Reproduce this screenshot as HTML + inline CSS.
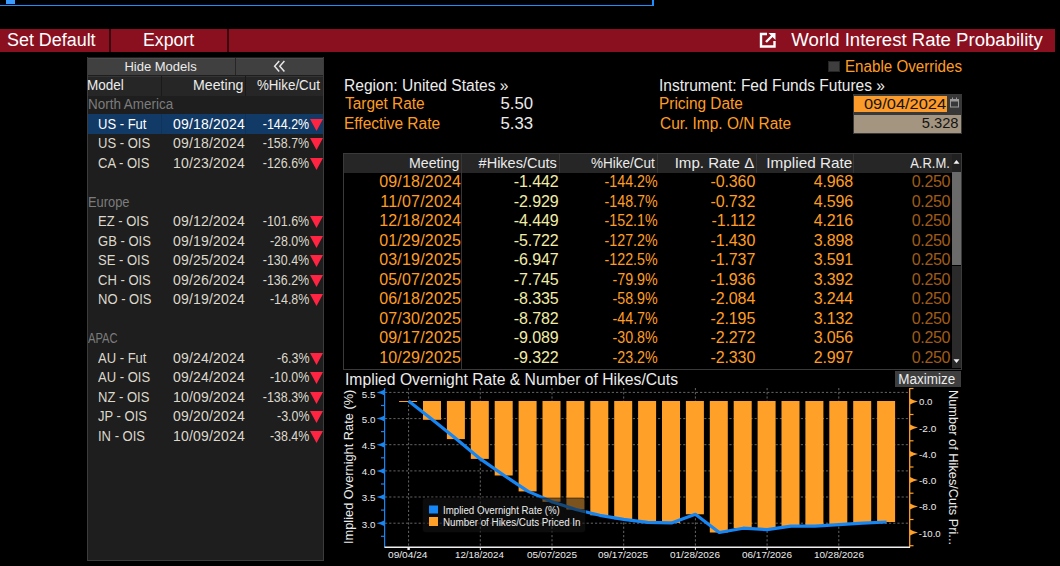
<!DOCTYPE html>
<html><head><meta charset="utf-8"><style>
html,body{margin:0;padding:0;background:#000;width:1060px;height:566px;overflow:hidden;}
body{position:relative;font-family:"Liberation Sans", sans-serif;}
.t{position:absolute;white-space:nowrap;font-family:"Liberation Sans", sans-serif;}
.r{position:absolute;}
</style></head><body>
<div class="r" style="left:0px;top:5px;width:654px;height:1px;background:#1e8fff;"></div>
<div class="r" style="left:652px;top:0px;width:2px;height:6px;background:#1e8fff;"></div>
<div class="r" style="left:6px;top:0px;width:9px;height:4px;background:#3b9bff;"></div>
<div class="r" style="left:0px;top:29px;width:1055px;height:23px;background:#8a1020;"></div>
<div class="r" style="left:109px;top:29px;width:2px;height:23px;background:#3a0610;"></div>
<div class="r" style="left:227px;top:29px;width:2px;height:23px;background:#3a0610;"></div>
<div class="t" style="top:31.00px;font-size:18px;line-height:18px;color:#ffffff;left:7.40px;transform:scaleX(0.9949);transform-origin:left center;">Set Default</div>
<div class="t" style="top:31.00px;font-size:18px;line-height:18px;color:#ffffff;left:143.32px;transform:scaleX(0.9839);transform-origin:left center;">Export</div>
<div class="t" style="top:31.00px;font-size:18px;line-height:18px;color:#ffffff;right:17.60px;transform:scaleX(1.0313);transform-origin:right center;">World Interest Rate Probability</div>
<svg class="r" style="left:758px;top:31px" width="20" height="18" viewBox="0 0 20 18"><path d="M9 3 H3 V15.5 H16.5 V10" fill="none" stroke="#fff" stroke-width="2.4"/><path d="M8 11 L15 4" stroke="#fff" stroke-width="2.4"/><path d="M10.5 2 H17.5 V9 Z" fill="#fff"/></svg>
<div class="r" style="left:87px;top:57px;width:237px;height:504px;background:#1e1e1e;"></div>
<div class="r" style="left:87px;top:57px;width:1px;height:504px;background:#3c3c3c;"></div>
<div class="r" style="left:323px;top:57px;width:1px;height:504px;background:#3c3c3c;"></div>
<div class="r" style="left:87px;top:560px;width:237px;height:1px;background:#3c3c3c;"></div>
<div class="r" style="left:88px;top:58px;width:147px;height:17px;background:#404040;"></div>
<div class="r" style="left:88px;top:58px;width:147px;height:1px;background:#4c4c4c;"></div>
<div class="r" style="left:236px;top:58px;width:87px;height:17px;background:#404040;"></div>
<div class="r" style="left:236px;top:58px;width:87px;height:1px;background:#4c4c4c;"></div>
<div class="r" style="left:235px;top:58px;width:1px;height:17px;background:#262626;"></div>
<div class="t" style="top:60.00px;font-size:13px;line-height:13px;color:#ececec;left:124.40px;">Hide Models</div>
<svg class="r" style="left:270px;top:57px" width="20" height="18"><path d="M9.2 4 L4.6 9.3 L9.2 14.6 M14.4 4 L9.8 9.3 L14.4 14.6" fill="none" stroke="#e6e6e6" stroke-width="1.5"/></svg>
<div class="r" style="left:88px;top:76px;width:235px;height:20px;background:#262626;"></div>
<div class="r" style="left:88px;top:76px;width:235px;height:1px;background:#343434;"></div>
<div class="r" style="left:161px;top:76px;width:1px;height:20px;background:#1a1a1a;"></div>
<div class="r" style="left:245px;top:76px;width:1px;height:20px;background:#1a1a1a;"></div>
<div class="t" style="top:77.00px;font-size:15px;line-height:15px;color:#ececec;left:87.40px;transform:scaleX(0.9008);transform-origin:left center;">Model</div>
<div class="t" style="top:77.00px;font-size:15px;line-height:15px;color:#ececec;right:816.38px;transform:scaleX(0.9419);transform-origin:right center;">Meeting</div>
<div class="t" style="top:77.00px;font-size:15px;line-height:15px;color:#ececec;right:740.24px;transform:scaleX(0.8886);transform-origin:right center;">%Hike/Cut</div>
<div class="t" style="top:97.20px;font-size:14px;line-height:14px;color:#7c7c7c;left:88.30px;transform:scaleX(0.9600);transform-origin:left center;">North America</div>
<div class="r" style="left:88px;top:114px;width:235px;height:20px;background:#123a66;"></div>
<div class="r" style="left:161px;top:114px;width:1px;height:20px;background:#0f335a;"></div>
<div class="r" style="left:245px;top:114px;width:1px;height:20px;background:#0f335a;"></div>
<div class="t" style="top:116.70px;font-size:14px;line-height:14px;color:#ffffff;left:97.50px;transform:scaleX(0.9300);transform-origin:left center;">US - Fut</div>
<div class="t" style="top:116.70px;font-size:14px;line-height:14px;color:#ffffff;letter-spacing:0.2px;right:815.00px;">09/18/2024</div>
<div class="t" style="top:116.70px;font-size:14px;line-height:14px;color:#ffffff;right:750.80px;transform:scaleX(0.8900);transform-origin:right center;">-144.2%</div>
<svg class="r" style="left:310px;top:118.5px" width="13" height="12"><path d="M0 0 H13 L6.5 12 Z" fill="#ff2442"/></svg>
<div class="t" style="top:136.20px;font-size:14px;line-height:14px;color:#dcd8cc;left:97.50px;transform:scaleX(0.9300);transform-origin:left center;">US - OIS</div>
<div class="t" style="top:136.20px;font-size:14px;line-height:14px;color:#dcd8cc;letter-spacing:0.2px;right:815.00px;">09/18/2024</div>
<div class="t" style="top:136.20px;font-size:14px;line-height:14px;color:#dcd8cc;right:750.80px;transform:scaleX(0.8900);transform-origin:right center;">-158.7%</div>
<svg class="r" style="left:310px;top:138.0px" width="13" height="12"><path d="M0 0 H13 L6.5 12 Z" fill="#ff2442"/></svg>
<div class="t" style="top:155.70px;font-size:14px;line-height:14px;color:#dcd8cc;left:97.50px;transform:scaleX(0.9300);transform-origin:left center;">CA - OIS</div>
<div class="t" style="top:155.70px;font-size:14px;line-height:14px;color:#dcd8cc;letter-spacing:0.2px;right:815.00px;">10/23/2024</div>
<div class="t" style="top:155.70px;font-size:14px;line-height:14px;color:#dcd8cc;right:750.80px;transform:scaleX(0.8900);transform-origin:right center;">-126.6%</div>
<svg class="r" style="left:310px;top:157.5px" width="13" height="12"><path d="M0 0 H13 L6.5 12 Z" fill="#ff2442"/></svg>
<div class="t" style="top:194.70px;font-size:14px;line-height:14px;color:#7c7c7c;left:88.30px;transform:scaleX(0.9200);transform-origin:left center;">Europe</div>
<div class="t" style="top:214.20px;font-size:14px;line-height:14px;color:#dcd8cc;left:97.50px;transform:scaleX(0.9300);transform-origin:left center;">EZ - OIS</div>
<div class="t" style="top:214.20px;font-size:14px;line-height:14px;color:#dcd8cc;letter-spacing:0.2px;right:815.00px;">09/12/2024</div>
<div class="t" style="top:214.20px;font-size:14px;line-height:14px;color:#dcd8cc;right:750.80px;transform:scaleX(0.8900);transform-origin:right center;">-101.6%</div>
<svg class="r" style="left:310px;top:216.0px" width="13" height="12"><path d="M0 0 H13 L6.5 12 Z" fill="#ff2442"/></svg>
<div class="t" style="top:233.70px;font-size:14px;line-height:14px;color:#dcd8cc;left:97.50px;transform:scaleX(0.9300);transform-origin:left center;">GB - OIS</div>
<div class="t" style="top:233.70px;font-size:14px;line-height:14px;color:#dcd8cc;letter-spacing:0.2px;right:815.00px;">09/19/2024</div>
<div class="t" style="top:233.70px;font-size:14px;line-height:14px;color:#dcd8cc;right:750.80px;transform:scaleX(0.8900);transform-origin:right center;">-28.0%</div>
<svg class="r" style="left:310px;top:235.5px" width="13" height="12"><path d="M0 0 H13 L6.5 12 Z" fill="#ff2442"/></svg>
<div class="t" style="top:253.20px;font-size:14px;line-height:14px;color:#dcd8cc;left:97.50px;transform:scaleX(0.9300);transform-origin:left center;">SE - OIS</div>
<div class="t" style="top:253.20px;font-size:14px;line-height:14px;color:#dcd8cc;letter-spacing:0.2px;right:815.00px;">09/25/2024</div>
<div class="t" style="top:253.20px;font-size:14px;line-height:14px;color:#dcd8cc;right:750.80px;transform:scaleX(0.8900);transform-origin:right center;">-130.4%</div>
<svg class="r" style="left:310px;top:255.0px" width="13" height="12"><path d="M0 0 H13 L6.5 12 Z" fill="#ff2442"/></svg>
<div class="t" style="top:272.70px;font-size:14px;line-height:14px;color:#dcd8cc;left:97.50px;transform:scaleX(0.9300);transform-origin:left center;">CH - OIS</div>
<div class="t" style="top:272.70px;font-size:14px;line-height:14px;color:#dcd8cc;letter-spacing:0.2px;right:815.00px;">09/26/2024</div>
<div class="t" style="top:272.70px;font-size:14px;line-height:14px;color:#dcd8cc;right:750.80px;transform:scaleX(0.8900);transform-origin:right center;">-136.2%</div>
<svg class="r" style="left:310px;top:274.5px" width="13" height="12"><path d="M0 0 H13 L6.5 12 Z" fill="#ff2442"/></svg>
<div class="t" style="top:292.20px;font-size:14px;line-height:14px;color:#dcd8cc;left:97.50px;transform:scaleX(0.9300);transform-origin:left center;">NO - OIS</div>
<div class="t" style="top:292.20px;font-size:14px;line-height:14px;color:#dcd8cc;letter-spacing:0.2px;right:815.00px;">09/19/2024</div>
<div class="t" style="top:292.20px;font-size:14px;line-height:14px;color:#dcd8cc;right:750.80px;transform:scaleX(0.8900);transform-origin:right center;">-14.8%</div>
<svg class="r" style="left:310px;top:294.0px" width="13" height="12"><path d="M0 0 H13 L6.5 12 Z" fill="#ff2442"/></svg>
<div class="t" style="top:331.20px;font-size:14px;line-height:14px;color:#7c7c7c;left:88.30px;transform:scaleX(0.8000);transform-origin:left center;">APAC</div>
<div class="t" style="top:350.70px;font-size:14px;line-height:14px;color:#dcd8cc;left:97.50px;transform:scaleX(0.9300);transform-origin:left center;">AU - Fut</div>
<div class="t" style="top:350.70px;font-size:14px;line-height:14px;color:#dcd8cc;letter-spacing:0.2px;right:815.00px;">09/24/2024</div>
<div class="t" style="top:350.70px;font-size:14px;line-height:14px;color:#dcd8cc;right:750.80px;transform:scaleX(0.8900);transform-origin:right center;">-6.3%</div>
<svg class="r" style="left:310px;top:352.5px" width="13" height="12"><path d="M0 0 H13 L6.5 12 Z" fill="#ff2442"/></svg>
<div class="t" style="top:370.20px;font-size:14px;line-height:14px;color:#dcd8cc;left:97.50px;transform:scaleX(0.9300);transform-origin:left center;">AU - OIS</div>
<div class="t" style="top:370.20px;font-size:14px;line-height:14px;color:#dcd8cc;letter-spacing:0.2px;right:815.00px;">09/24/2024</div>
<div class="t" style="top:370.20px;font-size:14px;line-height:14px;color:#dcd8cc;right:750.80px;transform:scaleX(0.8900);transform-origin:right center;">-10.0%</div>
<svg class="r" style="left:310px;top:372.0px" width="13" height="12"><path d="M0 0 H13 L6.5 12 Z" fill="#ff2442"/></svg>
<div class="t" style="top:389.70px;font-size:14px;line-height:14px;color:#dcd8cc;left:97.50px;transform:scaleX(0.9300);transform-origin:left center;">NZ - OIS</div>
<div class="t" style="top:389.70px;font-size:14px;line-height:14px;color:#dcd8cc;letter-spacing:0.2px;right:815.00px;">10/09/2024</div>
<div class="t" style="top:389.70px;font-size:14px;line-height:14px;color:#dcd8cc;right:750.80px;transform:scaleX(0.8900);transform-origin:right center;">-138.3%</div>
<svg class="r" style="left:310px;top:391.5px" width="13" height="12"><path d="M0 0 H13 L6.5 12 Z" fill="#ff2442"/></svg>
<div class="t" style="top:409.20px;font-size:14px;line-height:14px;color:#dcd8cc;left:97.50px;transform:scaleX(0.9300);transform-origin:left center;">JP - OIS</div>
<div class="t" style="top:409.20px;font-size:14px;line-height:14px;color:#dcd8cc;letter-spacing:0.2px;right:815.00px;">09/20/2024</div>
<div class="t" style="top:409.20px;font-size:14px;line-height:14px;color:#dcd8cc;right:750.80px;transform:scaleX(0.8900);transform-origin:right center;">-3.0%</div>
<svg class="r" style="left:310px;top:411.0px" width="13" height="12"><path d="M0 0 H13 L6.5 12 Z" fill="#ff2442"/></svg>
<div class="t" style="top:428.70px;font-size:14px;line-height:14px;color:#dcd8cc;left:97.50px;transform:scaleX(0.9300);transform-origin:left center;">IN - OIS</div>
<div class="t" style="top:428.70px;font-size:14px;line-height:14px;color:#dcd8cc;letter-spacing:0.2px;right:815.00px;">10/09/2024</div>
<div class="t" style="top:428.70px;font-size:14px;line-height:14px;color:#dcd8cc;right:750.80px;transform:scaleX(0.8900);transform-origin:right center;">-38.4%</div>
<svg class="r" style="left:310px;top:430.5px" width="13" height="12"><path d="M0 0 H13 L6.5 12 Z" fill="#ff2442"/></svg>
<div class="t" style="top:78.00px;font-size:16px;line-height:16px;color:#ececec;left:344.33px;transform:scaleX(0.9733);transform-origin:left center;">Region: United States &#187;</div>
<div class="t" style="top:96.00px;font-size:16px;line-height:16px;color:#ff9d22;left:345.30px;transform:scaleX(0.9624);transform-origin:left center;">Target Rate</div>
<div class="t" style="top:115.50px;font-size:16px;line-height:16px;color:#ff9d22;left:344.33px;transform:scaleX(0.9673);transform-origin:left center;">Effective Rate</div>
<div class="t" style="top:96.00px;font-size:16px;line-height:16px;color:#ececec;right:527.11px;transform:scaleX(1.0467);transform-origin:right center;">5.50</div>
<div class="t" style="top:115.50px;font-size:16px;line-height:16px;color:#ececec;right:527.11px;transform:scaleX(1.0467);transform-origin:right center;">5.33</div>
<div class="t" style="top:78.00px;font-size:16px;line-height:16px;color:#ececec;left:659.33px;transform:scaleX(0.9694);transform-origin:left center;">Instrument: Fed Funds Futures &#187;</div>
<div class="t" style="top:96.00px;font-size:16px;line-height:16px;color:#ff9d22;left:659.34px;transform:scaleX(0.9623);transform-origin:left center;">Pricing Date</div>
<div class="t" style="top:115.50px;font-size:16px;line-height:16px;color:#ff9d22;left:660.30px;transform:scaleX(0.9644);transform-origin:left center;">Cur. Imp. O/N Rate</div>
<div class="r" style="left:828px;top:61px;width:12px;height:11px;background:#3e3e3e;border:1px solid #262626;box-sizing:border-box;"></div>
<div class="t" style="top:59.00px;font-size:16px;line-height:16px;color:#ff9d22;left:844.75px;transform:scaleX(0.9468);transform-origin:left center;">Enable Overrides</div>
<div class="r" style="left:853px;top:94px;width:109px;height:40px;background:#383838;"></div>
<div class="r" style="left:854px;top:96px;width:93px;height:16px;background:#fd9b2a;"></div>
<div class="t" style="top:95.50px;font-size:15px;line-height:15px;color:#141414;right:114.43px;transform:scaleX(1.0933);transform-origin:right center;">09/04/2024</div>
<svg class="r" style="left:949px;top:96px" width="11" height="13"><rect x="1.5" y="3.5" width="8" height="7.5" fill="none" stroke="#9a9a9a" stroke-width="1"/><rect x="1.5" y="3.5" width="8" height="2" fill="#9a9a9a"/><rect x="3" y="1.5" width="1" height="2.5" fill="#9a9a9a"/><rect x="7" y="1.5" width="1" height="2.5" fill="#9a9a9a"/></svg>
<div class="r" style="left:854px;top:115px;width:107px;height:18px;background:#a49580;"></div>
<div class="t" style="top:115.00px;font-size:15px;line-height:15px;color:#141414;right:101.26px;transform:scaleX(0.9813);transform-origin:right center;">5.328</div>
<div class="r" style="left:343px;top:153px;width:619px;height:217px;background:#000000;"></div>
<div class="r" style="left:343px;top:153px;width:619px;height:1px;background:#3a3a3a;"></div>
<div class="r" style="left:343px;top:369px;width:619px;height:1px;background:#3a3a3a;"></div>
<div class="r" style="left:343px;top:153px;width:1px;height:217px;background:#3a3a3a;"></div>
<div class="r" style="left:961px;top:153px;width:1px;height:217px;background:#3a3a3a;"></div>
<div class="r" style="left:344px;top:154px;width:608px;height:19px;background:#262626;"></div>
<div class="r" style="left:461px;top:154px;width:1px;height:19px;background:#363636;"></div>
<div class="r" style="left:559px;top:154px;width:1px;height:19px;background:#363636;"></div>
<div class="r" style="left:657px;top:154px;width:1px;height:19px;background:#363636;"></div>
<div class="r" style="left:756px;top:154px;width:1px;height:19px;background:#363636;"></div>
<div class="r" style="left:853px;top:154px;width:1px;height:19px;background:#363636;"></div>
<div class="r" style="left:461px;top:173px;width:1px;height:196px;background:#363636;"></div>
<div class="t" style="top:155.00px;font-size:15px;line-height:15px;color:#ececec;right:600.78px;transform:scaleX(0.9419);transform-origin:right center;">Meeting</div>
<div class="t" style="top:155.00px;font-size:15px;line-height:15px;color:#ececec;right:502.82px;transform:scaleX(0.9682);transform-origin:right center;">#Hikes/Cuts</div>
<div class="t" style="top:155.00px;font-size:15px;line-height:15px;color:#ececec;right:405.45px;transform:scaleX(0.8997);transform-origin:right center;">%Hike/Cut</div>
<div class="t" style="top:155.00px;font-size:15px;line-height:15px;color:#ececec;right:305.78px;transform:scaleX(1.0039);transform-origin:right center;">Imp. Rate &#916;</div>
<div class="t" style="top:155.00px;font-size:15px;line-height:15px;color:#ececec;right:207.95px;transform:scaleX(1.0197);transform-origin:right center;">Implied Rate</div>
<div class="t" style="top:155.00px;font-size:15px;line-height:15px;color:#ececec;right:110.39px;transform:scaleX(0.8642);transform-origin:right center;">A.R.M.</div>
<div class="r" style="left:952px;top:154px;width:9px;height:18px;background:#202020;"></div>
<div class="r" style="left:952px;top:172px;width:9px;height:93px;background:#6a6a6a;"></div>
<div class="r" style="left:952px;top:266px;width:9px;height:102px;background:#2a2a2a;"></div>
<svg class="r" style="left:952px;top:158px" width="9" height="8"><path d="M1.5 5.8 L4.5 2 L7.5 5.8 Z" fill="#f0f0f0"/></svg>
<svg class="r" style="left:952px;top:357px" width="9" height="8"><path d="M1.5 2.2 L4.5 6 L7.5 2.2 Z" fill="#f0f0f0"/></svg>
<div class="t" style="top:174.00px;font-size:16px;line-height:16px;color:#ff9d22;letter-spacing:0.2px;right:598.80px;">09/18/2024</div>
<div class="t" style="top:174.00px;font-size:16px;line-height:16px;color:#f2eca6;letter-spacing:-0.1px;right:501.40px;">-1.442</div>
<div class="t" style="top:174.00px;font-size:16px;line-height:16px;color:#ff9d22;right:402.40px;transform:scaleX(0.8900);transform-origin:right center;">-144.2%</div>
<div class="t" style="top:174.00px;font-size:16px;line-height:16px;color:#ff9d22;letter-spacing:-0.1px;right:304.80px;">-0.360</div>
<div class="t" style="top:174.00px;font-size:16px;line-height:16px;color:#ff9d22;letter-spacing:-0.2px;right:207.10px;">4.968</div>
<div class="t" style="top:174.00px;font-size:16px;line-height:16px;color:#a05c16;letter-spacing:-0.3px;right:109.80px;">0.250</div>
<div class="t" style="top:193.50px;font-size:16px;line-height:16px;color:#ff9d22;letter-spacing:0.2px;right:598.80px;">11/07/2024</div>
<div class="t" style="top:193.50px;font-size:16px;line-height:16px;color:#f2eca6;letter-spacing:-0.1px;right:501.40px;">-2.929</div>
<div class="t" style="top:193.50px;font-size:16px;line-height:16px;color:#ff9d22;right:402.40px;transform:scaleX(0.8900);transform-origin:right center;">-148.7%</div>
<div class="t" style="top:193.50px;font-size:16px;line-height:16px;color:#ff9d22;letter-spacing:-0.1px;right:304.80px;">-0.732</div>
<div class="t" style="top:193.50px;font-size:16px;line-height:16px;color:#ff9d22;letter-spacing:-0.2px;right:207.10px;">4.596</div>
<div class="t" style="top:193.50px;font-size:16px;line-height:16px;color:#a05c16;letter-spacing:-0.3px;right:109.80px;">0.250</div>
<div class="t" style="top:213.00px;font-size:16px;line-height:16px;color:#ff9d22;letter-spacing:0.2px;right:598.80px;">12/18/2024</div>
<div class="t" style="top:213.00px;font-size:16px;line-height:16px;color:#f2eca6;letter-spacing:-0.1px;right:501.40px;">-4.449</div>
<div class="t" style="top:213.00px;font-size:16px;line-height:16px;color:#ff9d22;right:402.40px;transform:scaleX(0.8900);transform-origin:right center;">-152.1%</div>
<div class="t" style="top:213.00px;font-size:16px;line-height:16px;color:#ff9d22;letter-spacing:-0.1px;right:304.80px;">-1.112</div>
<div class="t" style="top:213.00px;font-size:16px;line-height:16px;color:#ff9d22;letter-spacing:-0.2px;right:207.10px;">4.216</div>
<div class="t" style="top:213.00px;font-size:16px;line-height:16px;color:#a05c16;letter-spacing:-0.3px;right:109.80px;">0.250</div>
<div class="t" style="top:232.50px;font-size:16px;line-height:16px;color:#ff9d22;letter-spacing:0.2px;right:598.80px;">01/29/2025</div>
<div class="t" style="top:232.50px;font-size:16px;line-height:16px;color:#f2eca6;letter-spacing:-0.1px;right:501.40px;">-5.722</div>
<div class="t" style="top:232.50px;font-size:16px;line-height:16px;color:#ff9d22;right:402.40px;transform:scaleX(0.8900);transform-origin:right center;">-127.2%</div>
<div class="t" style="top:232.50px;font-size:16px;line-height:16px;color:#ff9d22;letter-spacing:-0.1px;right:304.80px;">-1.430</div>
<div class="t" style="top:232.50px;font-size:16px;line-height:16px;color:#ff9d22;letter-spacing:-0.2px;right:207.10px;">3.898</div>
<div class="t" style="top:232.50px;font-size:16px;line-height:16px;color:#a05c16;letter-spacing:-0.3px;right:109.80px;">0.250</div>
<div class="t" style="top:252.00px;font-size:16px;line-height:16px;color:#ff9d22;letter-spacing:0.2px;right:598.80px;">03/19/2025</div>
<div class="t" style="top:252.00px;font-size:16px;line-height:16px;color:#f2eca6;letter-spacing:-0.1px;right:501.40px;">-6.947</div>
<div class="t" style="top:252.00px;font-size:16px;line-height:16px;color:#ff9d22;right:402.40px;transform:scaleX(0.8900);transform-origin:right center;">-122.5%</div>
<div class="t" style="top:252.00px;font-size:16px;line-height:16px;color:#ff9d22;letter-spacing:-0.1px;right:304.80px;">-1.737</div>
<div class="t" style="top:252.00px;font-size:16px;line-height:16px;color:#ff9d22;letter-spacing:-0.2px;right:207.10px;">3.591</div>
<div class="t" style="top:252.00px;font-size:16px;line-height:16px;color:#a05c16;letter-spacing:-0.3px;right:109.80px;">0.250</div>
<div class="t" style="top:271.50px;font-size:16px;line-height:16px;color:#ff9d22;letter-spacing:0.2px;right:598.80px;">05/07/2025</div>
<div class="t" style="top:271.50px;font-size:16px;line-height:16px;color:#f2eca6;letter-spacing:-0.1px;right:501.40px;">-7.745</div>
<div class="t" style="top:271.50px;font-size:16px;line-height:16px;color:#ff9d22;right:402.40px;transform:scaleX(0.8900);transform-origin:right center;">-79.9%</div>
<div class="t" style="top:271.50px;font-size:16px;line-height:16px;color:#ff9d22;letter-spacing:-0.1px;right:304.80px;">-1.936</div>
<div class="t" style="top:271.50px;font-size:16px;line-height:16px;color:#ff9d22;letter-spacing:-0.2px;right:207.10px;">3.392</div>
<div class="t" style="top:271.50px;font-size:16px;line-height:16px;color:#a05c16;letter-spacing:-0.3px;right:109.80px;">0.250</div>
<div class="t" style="top:291.00px;font-size:16px;line-height:16px;color:#ff9d22;letter-spacing:0.2px;right:598.80px;">06/18/2025</div>
<div class="t" style="top:291.00px;font-size:16px;line-height:16px;color:#f2eca6;letter-spacing:-0.1px;right:501.40px;">-8.335</div>
<div class="t" style="top:291.00px;font-size:16px;line-height:16px;color:#ff9d22;right:402.40px;transform:scaleX(0.8900);transform-origin:right center;">-58.9%</div>
<div class="t" style="top:291.00px;font-size:16px;line-height:16px;color:#ff9d22;letter-spacing:-0.1px;right:304.80px;">-2.084</div>
<div class="t" style="top:291.00px;font-size:16px;line-height:16px;color:#ff9d22;letter-spacing:-0.2px;right:207.10px;">3.244</div>
<div class="t" style="top:291.00px;font-size:16px;line-height:16px;color:#a05c16;letter-spacing:-0.3px;right:109.80px;">0.250</div>
<div class="t" style="top:310.50px;font-size:16px;line-height:16px;color:#ff9d22;letter-spacing:0.2px;right:598.80px;">07/30/2025</div>
<div class="t" style="top:310.50px;font-size:16px;line-height:16px;color:#f2eca6;letter-spacing:-0.1px;right:501.40px;">-8.782</div>
<div class="t" style="top:310.50px;font-size:16px;line-height:16px;color:#ff9d22;right:402.40px;transform:scaleX(0.8900);transform-origin:right center;">-44.7%</div>
<div class="t" style="top:310.50px;font-size:16px;line-height:16px;color:#ff9d22;letter-spacing:-0.1px;right:304.80px;">-2.195</div>
<div class="t" style="top:310.50px;font-size:16px;line-height:16px;color:#ff9d22;letter-spacing:-0.2px;right:207.10px;">3.132</div>
<div class="t" style="top:310.50px;font-size:16px;line-height:16px;color:#a05c16;letter-spacing:-0.3px;right:109.80px;">0.250</div>
<div class="t" style="top:330.00px;font-size:16px;line-height:16px;color:#ff9d22;letter-spacing:0.2px;right:598.80px;">09/17/2025</div>
<div class="t" style="top:330.00px;font-size:16px;line-height:16px;color:#f2eca6;letter-spacing:-0.1px;right:501.40px;">-9.089</div>
<div class="t" style="top:330.00px;font-size:16px;line-height:16px;color:#ff9d22;right:402.40px;transform:scaleX(0.8900);transform-origin:right center;">-30.8%</div>
<div class="t" style="top:330.00px;font-size:16px;line-height:16px;color:#ff9d22;letter-spacing:-0.1px;right:304.80px;">-2.272</div>
<div class="t" style="top:330.00px;font-size:16px;line-height:16px;color:#ff9d22;letter-spacing:-0.2px;right:207.10px;">3.056</div>
<div class="t" style="top:330.00px;font-size:16px;line-height:16px;color:#a05c16;letter-spacing:-0.3px;right:109.80px;">0.250</div>
<div class="t" style="top:349.50px;font-size:16px;line-height:16px;color:#ff9d22;letter-spacing:0.2px;right:598.80px;">10/29/2025</div>
<div class="t" style="top:349.50px;font-size:16px;line-height:16px;color:#f2eca6;letter-spacing:-0.1px;right:501.40px;">-9.322</div>
<div class="t" style="top:349.50px;font-size:16px;line-height:16px;color:#ff9d22;right:402.40px;transform:scaleX(0.8900);transform-origin:right center;">-23.2%</div>
<div class="t" style="top:349.50px;font-size:16px;line-height:16px;color:#ff9d22;letter-spacing:-0.1px;right:304.80px;">-2.330</div>
<div class="t" style="top:349.50px;font-size:16px;line-height:16px;color:#ff9d22;letter-spacing:-0.2px;right:207.10px;">2.997</div>
<div class="t" style="top:349.50px;font-size:16px;line-height:16px;color:#a05c16;letter-spacing:-0.3px;right:109.80px;">0.250</div>
<div class="t" style="top:372.00px;font-size:16px;line-height:16px;color:#ececec;left:345.02px;transform:scaleX(0.9803);transform-origin:left center;">Implied Overnight Rate &amp; Number of Hikes/Cuts</div>
<div class="r" style="left:895px;top:371px;width:66px;height:16px;background:#3e3e3e;"></div>
<div class="t" style="top:372.00px;font-size:14px;line-height:14px;color:#ececec;right:104.51px;transform:scaleX(0.9600);transform-origin:right center;">Maximize</div>
<svg class="r" style="left:0;top:0" width="1060" height="566" viewBox="0 0 1060 566">
<line x1="385" y1="392.4" x2="908" y2="392.4" stroke="#646464" stroke-width="1" stroke-dasharray="2.2 2"/>
<line x1="385" y1="418.6" x2="908" y2="418.6" stroke="#646464" stroke-width="1" stroke-dasharray="2.2 2"/>
<line x1="385" y1="444.7" x2="908" y2="444.7" stroke="#646464" stroke-width="1" stroke-dasharray="2.2 2"/>
<line x1="385" y1="470.9" x2="908" y2="470.9" stroke="#646464" stroke-width="1" stroke-dasharray="2.2 2"/>
<line x1="385" y1="497.0" x2="908" y2="497.0" stroke="#646464" stroke-width="1" stroke-dasharray="2.2 2"/>
<line x1="385" y1="523.2" x2="908" y2="523.2" stroke="#646464" stroke-width="1" stroke-dasharray="2.2 2"/>
<line x1="408.6" y1="388" x2="408.6" y2="547" stroke="#646464" stroke-width="1" stroke-dasharray="2.2 2"/>
<line x1="480.3" y1="388" x2="480.3" y2="547" stroke="#646464" stroke-width="1" stroke-dasharray="2.2 2"/>
<line x1="552.0" y1="388" x2="552.0" y2="547" stroke="#646464" stroke-width="1" stroke-dasharray="2.2 2"/>
<line x1="623.7" y1="388" x2="623.7" y2="547" stroke="#646464" stroke-width="1" stroke-dasharray="2.2 2"/>
<line x1="695.4" y1="388" x2="695.4" y2="547" stroke="#646464" stroke-width="1" stroke-dasharray="2.2 2"/>
<line x1="767.1" y1="388" x2="767.1" y2="547" stroke="#646464" stroke-width="1" stroke-dasharray="2.2 2"/>
<line x1="838.8" y1="388" x2="838.8" y2="547" stroke="#646464" stroke-width="1" stroke-dasharray="2.2 2"/>
<line x1="399.1" y1="401.5" x2="417.1" y2="401.5" stroke="#ffa028" stroke-width="1"/>
<rect x="423.0" y="401.0" width="18" height="18.8" fill="#ffa028"/>
<rect x="446.9" y="401.0" width="18" height="38.1" fill="#ffa028"/>
<rect x="470.8" y="401.0" width="18" height="57.9" fill="#ffa028"/>
<rect x="494.7" y="401.0" width="18" height="74.5" fill="#ffa028"/>
<rect x="518.6" y="401.0" width="18" height="90.4" fill="#ffa028"/>
<rect x="542.5" y="401.0" width="18" height="100.8" fill="#ffa028"/>
<rect x="566.4" y="401.0" width="18" height="108.5" fill="#ffa028"/>
<rect x="590.3" y="401.0" width="18" height="114.3" fill="#ffa028"/>
<rect x="614.2" y="401.0" width="18" height="118.3" fill="#ffa028"/>
<rect x="638.1" y="401.0" width="18" height="121.4" fill="#ffa028"/>
<rect x="662.0" y="401.0" width="18" height="121.9" fill="#ffa028"/>
<rect x="685.9" y="401.0" width="18" height="113.3" fill="#ffa028"/>
<rect x="709.8" y="401.0" width="18" height="131.5" fill="#ffa028"/>
<rect x="733.7" y="401.0" width="18" height="127.2" fill="#ffa028"/>
<rect x="757.6" y="401.0" width="18" height="128.6" fill="#ffa028"/>
<rect x="781.5" y="401.0" width="18" height="125.1" fill="#ffa028"/>
<rect x="805.4" y="401.0" width="18" height="125.1" fill="#ffa028"/>
<rect x="829.3" y="401.0" width="18" height="123.6" fill="#ffa028"/>
<rect x="853.2" y="401.0" width="18" height="122.1" fill="#ffa028"/>
<rect x="877.1" y="401.0" width="18" height="121.0" fill="#ffa028"/>
<polyline points="408.6,401.0 432.5,419.8 456.4,439.1 480.3,458.9 504.2,475.5 528.1,491.4 552.0,501.8 575.9,509.5 599.8,515.3 623.7,519.3 647.6,522.4 671.5,522.9 695.4,514.3 719.3,532.5 743.2,528.2 767.1,529.6 791.0,526.1 814.9,526.1 838.8,524.6 862.7,523.1 886.6,522.0" fill="none" stroke="#1686f5" stroke-width="3.2" stroke-linejoin="round"/>
<rect x="422.5" y="498" width="163" height="34.5" rx="3" fill="rgba(22,22,22,0.56)" stroke="rgba(0,0,0,0.5)" stroke-width="1"/>
<rect x="429" y="505.5" width="9" height="8" fill="#1686f5"/>
<rect x="429" y="517" width="9" height="9" fill="#ffa028"/>
<line x1="384.6" y1="388" x2="384.6" y2="547.5" stroke="#1686f5" stroke-width="1.2"/>
<path d="M376.5 392.4 Q381 391.4 384.7 389.4 V395.4 Q381 393.4 376.5 392.4 Z" fill="#1686f5"/>
<line x1="381" y1="405.5" x2="384.7" y2="405.5" stroke="#1686f5" stroke-width="1.2"/>
<path d="M376.5 418.6 Q381 417.6 384.7 415.6 V421.6 Q381 419.6 376.5 418.6 Z" fill="#1686f5"/>
<line x1="381" y1="431.6" x2="384.7" y2="431.6" stroke="#1686f5" stroke-width="1.2"/>
<path d="M376.5 444.7 Q381 443.7 384.7 441.7 V447.7 Q381 445.7 376.5 444.7 Z" fill="#1686f5"/>
<line x1="381" y1="457.8" x2="384.7" y2="457.8" stroke="#1686f5" stroke-width="1.2"/>
<path d="M376.5 470.9 Q381 469.9 384.7 467.9 V473.9 Q381 471.9 376.5 470.9 Z" fill="#1686f5"/>
<line x1="381" y1="484.0" x2="384.7" y2="484.0" stroke="#1686f5" stroke-width="1.2"/>
<path d="M376.5 497.0 Q381 496.0 384.7 494.0 V500.0 Q381 498.0 376.5 497.0 Z" fill="#1686f5"/>
<line x1="381" y1="510.1" x2="384.7" y2="510.1" stroke="#1686f5" stroke-width="1.2"/>
<path d="M376.5 523.2 Q381 522.2 384.7 520.2 V526.2 Q381 524.2 376.5 523.2 Z" fill="#1686f5"/>
<line x1="381" y1="536.3" x2="384.7" y2="536.3" stroke="#1686f5" stroke-width="1.2"/>
<line x1="909.7" y1="388" x2="909.7" y2="547.5" stroke="#ffa028" stroke-width="1.3"/>
<line x1="910" y1="388.5" x2="913.5" y2="388.5" stroke="#ffa028" stroke-width="1.2"/>
<path d="M918 401.4 Q913.5 400.4 910 398.4 V404.4 Q913.5 402.4 918 401.4 Z" fill="#ffa028"/>
<line x1="910" y1="414.5" x2="913.5" y2="414.5" stroke="#ffa028" stroke-width="1.2"/>
<path d="M918 427.6 Q913.5 426.6 910 424.6 V430.6 Q913.5 428.6 918 427.6 Z" fill="#ffa028"/>
<line x1="910" y1="440.8" x2="913.5" y2="440.8" stroke="#ffa028" stroke-width="1.2"/>
<path d="M918 453.9 Q913.5 452.9 910 450.9 V456.9 Q913.5 454.9 918 453.9 Z" fill="#ffa028"/>
<line x1="910" y1="467.0" x2="913.5" y2="467.0" stroke="#ffa028" stroke-width="1.2"/>
<path d="M918 480.1 Q913.5 479.1 910 477.1 V483.1 Q913.5 481.1 918 480.1 Z" fill="#ffa028"/>
<line x1="910" y1="493.2" x2="913.5" y2="493.2" stroke="#ffa028" stroke-width="1.2"/>
<path d="M918 506.4 Q913.5 505.4 910 503.4 V509.4 Q913.5 507.4 918 506.4 Z" fill="#ffa028"/>
<line x1="910" y1="519.5" x2="913.5" y2="519.5" stroke="#ffa028" stroke-width="1.2"/>
<path d="M918 532.6 Q913.5 531.6 910 529.6 V535.6 Q913.5 533.6 918 532.6 Z" fill="#ffa028"/>
<line x1="910" y1="545.7" x2="913.5" y2="545.7" stroke="#ffa028" stroke-width="1.2"/>
<line x1="384.5" y1="547.3" x2="910" y2="547.3" stroke="#f0f0f0" stroke-width="1.4"/>
<line x1="408.6" y1="547" x2="408.6" y2="550" stroke="#f0f0f0" stroke-width="2.4"/>
<line x1="480.3" y1="547" x2="480.3" y2="550" stroke="#f0f0f0" stroke-width="1"/>
<line x1="552.0" y1="547" x2="552.0" y2="550" stroke="#f0f0f0" stroke-width="1"/>
<line x1="623.7" y1="547" x2="623.7" y2="550" stroke="#f0f0f0" stroke-width="1"/>
<line x1="695.4" y1="547" x2="695.4" y2="550" stroke="#f0f0f0" stroke-width="1"/>
<line x1="767.1" y1="547" x2="767.1" y2="550" stroke="#f0f0f0" stroke-width="1"/>
<line x1="838.8" y1="547" x2="838.8" y2="550" stroke="#f0f0f0" stroke-width="1"/>
</svg>
<div class="t" style="top:390.20px;font-size:9.6px;line-height:9.6px;color:#ececec;right:684.36px;transform:scaleX(1.0153);transform-origin:right center;">5.5</div>
<div class="t" style="top:414.86px;font-size:9.6px;line-height:9.6px;color:#ececec;right:684.36px;transform:scaleX(1.0153);transform-origin:right center;">5.0</div>
<div class="t" style="top:441.02px;font-size:9.6px;line-height:9.6px;color:#ececec;right:684.36px;transform:scaleX(1.0153);transform-origin:right center;">4.5</div>
<div class="t" style="top:467.18px;font-size:9.6px;line-height:9.6px;color:#ececec;right:684.36px;transform:scaleX(1.0153);transform-origin:right center;">4.0</div>
<div class="t" style="top:493.34px;font-size:9.6px;line-height:9.6px;color:#ececec;right:684.36px;transform:scaleX(1.0153);transform-origin:right center;">3.5</div>
<div class="t" style="top:519.50px;font-size:9.6px;line-height:9.6px;color:#ececec;right:684.36px;transform:scaleX(1.0153);transform-origin:right center;">3.0</div>
<div class="t" style="top:397.40px;font-size:9.6px;line-height:9.6px;color:#ececec;left:918.80px;transform:scaleX(1.0076);transform-origin:left center;">0.0</div>
<div class="t" style="top:423.64px;font-size:9.6px;line-height:9.6px;color:#ececec;left:918.80px;transform:scaleX(1.0435);transform-origin:left center;">-2.0</div>
<div class="t" style="top:449.88px;font-size:9.6px;line-height:9.6px;color:#ececec;left:918.80px;transform:scaleX(1.0435);transform-origin:left center;">-4.0</div>
<div class="t" style="top:476.12px;font-size:9.6px;line-height:9.6px;color:#ececec;left:918.80px;transform:scaleX(1.0435);transform-origin:left center;">-6.0</div>
<div class="t" style="top:502.36px;font-size:9.6px;line-height:9.6px;color:#ececec;left:918.80px;transform:scaleX(1.0435);transform-origin:left center;">-8.0</div>
<div class="t" style="top:528.60px;font-size:9.6px;line-height:9.6px;color:#ececec;left:918.80px;">-10.0</div>
<div class="t" style="top:550.00px;font-size:9.6px;line-height:9.6px;color:#ececec;left:388.00px;transform:scaleX(1.0576);transform-origin:left center;">09/04/24</div>
<div class="t" style="top:550.00px;font-size:9.6px;line-height:9.6px;color:#ececec;left:455.00px;transform:scaleX(1.0189);transform-origin:left center;">12/18/2024</div>
<div class="t" style="top:550.00px;font-size:9.6px;line-height:9.6px;color:#ececec;left:526.70px;transform:scaleX(1.0403);transform-origin:left center;">05/07/2025</div>
<div class="t" style="top:550.00px;font-size:9.6px;line-height:9.6px;color:#ececec;left:598.40px;transform:scaleX(1.0403);transform-origin:left center;">09/17/2025</div>
<div class="t" style="top:550.00px;font-size:9.6px;line-height:9.6px;color:#ececec;left:670.10px;transform:scaleX(1.0403);transform-origin:left center;">01/28/2026</div>
<div class="t" style="top:550.00px;font-size:9.6px;line-height:9.6px;color:#ececec;left:741.80px;transform:scaleX(1.0403);transform-origin:left center;">06/17/2026</div>
<div class="t" style="top:550.00px;font-size:9.6px;line-height:9.6px;color:#ececec;left:813.50px;transform:scaleX(1.0403);transform-origin:left center;">10/28/2026</div>
<div class="t" style="top:506.00px;font-size:10px;line-height:10px;color:#ececec;left:443.00px;transform:scaleX(0.9686);transform-origin:left center;">Implied Overnight Rate (%)</div>
<div class="t" style="top:517.50px;font-size:10px;line-height:10px;color:#ececec;left:443.00px;transform:scaleX(0.9822);transform-origin:left center;">Number of Hikes/Cuts Priced In</div>
<div class="t" style="left:272.2px;top:459.6px;width:154px;height:14px;font-size:12.8px;line-height:14px;color:#ececec;text-align:center;transform:rotate(-90deg);">Implied Overnight Rate (%)</div>
<div class="t" style="left:875.6px;top:460.2px;width:154px;height:14px;font-size:12.8px;line-height:14px;color:#ececec;text-align:center;transform:rotate(90deg);">Number of Hikes/Cuts Pri...</div>
</body></html>
